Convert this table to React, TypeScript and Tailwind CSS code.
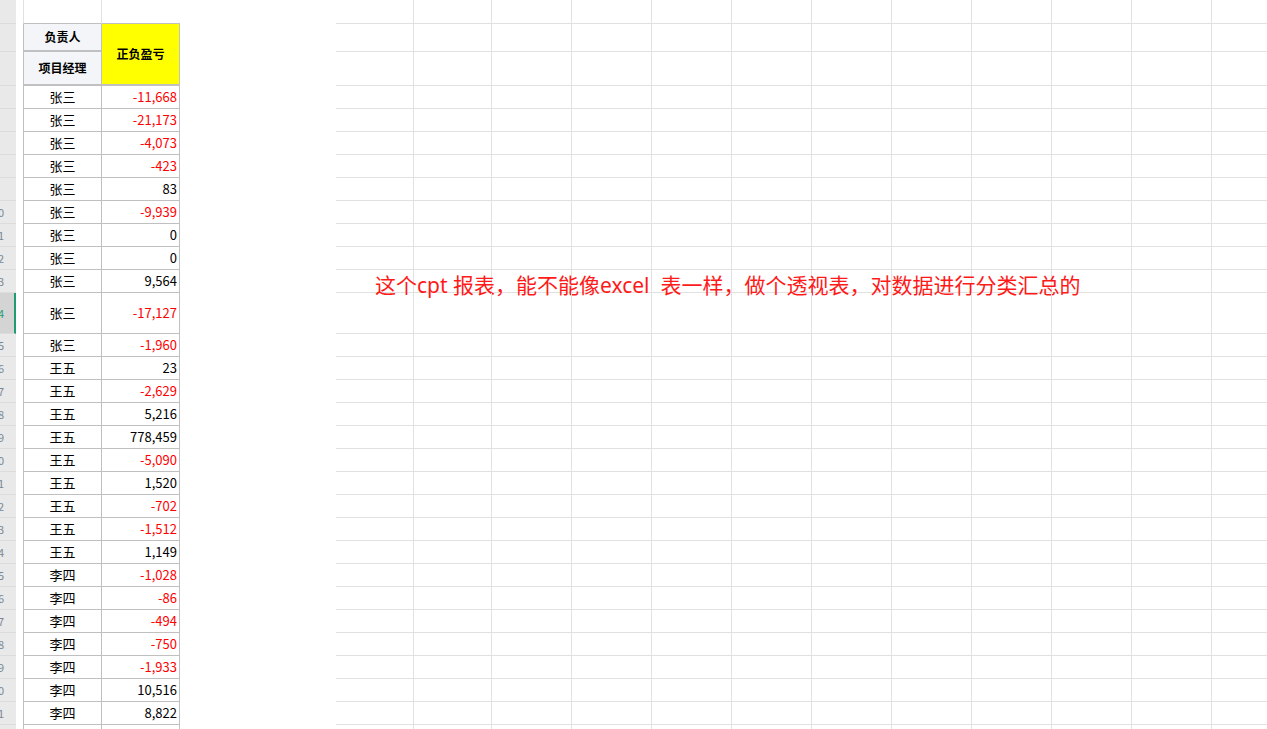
const rows: [string, string][] = [
  ['张三', '-11,668'],
  ['张三', '-21,173'],
  ['张三', '-4,073'],
  ['张三', '-423'],
  ['张三', '83'],
  ['张三', '-9,939'],
  ['张三', '0'],
  ['张三', '0'],
  ['张三', '9,564'],
  ['张三', '-17,127'],
  ['张三', '-1,960'],
  ['王五', '23'],
  ['王五', '-2,629'],
  ['王五', '5,216'],
  ['王五', '778,459'],
  ['王五', '-5,090'],
  ['王五', '1,520'],
  ['王五', '-702'],
  ['王五', '-1,512'],
  ['王五', '1,149'],
  ['李四', '-1,028'],
  ['李四', '-86'],
  ['李四', '-494'],
  ['李四', '-750'],
  ['李四', '-1,933'],
  ['李四', '10,516'],
  ['李四', '8,822'],
  ['', ''],
];

// columns of the empty sheet on the right
const cols = [
  'w-[78px]', 'w-[78px]', 'w-[80px]', 'w-[80px]', 'w-[80px]', 'w-[80px]',
  'w-[80px]', 'w-[80px]', 'w-[80px]', 'w-[80px]', 'w-[80px]',
];

const TALL = 9; // the 张三 -17,127 row
const NOTE = 8; // row holding the red note

function rowH(i: number) {
  return i === TALL ? 'h-[41px]' : 'h-[23px]';
}

function GridRow({ h, children }: { h: string; children?: React.ReactNode }) {
  return (
    <div className={`relative flex shrink-0 border-b border-[#e1e1e1] ${h}`}>
      {cols.map((w, i) => (
        <div key={i} className={`shrink-0 border-r border-[#e1e1e1] ${w}`} />
      ))}
      <div className="flex-1" />
      {children}
    </div>
  );
}

function Strip({ h, digit, active }: { h: string; digit?: string; active?: boolean }) {
  return (
    <div
      className={`flex w-[16px] shrink-0 items-center overflow-hidden border-b border-[#dcdcdc] text-[11px] ${h} ${
        active ? 'border-r-2 border-r-[#1f9d70] bg-[#d4d4d4] text-[#1f9d70]' : 'bg-[#e9e9e9] text-[#7b8894]'
      }`}
    >
      {digit && <span className="-ml-[2px]">{digit}</span>}
    </div>
  );
}

export default function App() {
  return (
    <div className="flex h-[729px] w-[1267px] overflow-hidden bg-white font-['Noto_Sans_CJK_SC',sans-serif]">
      {/* pasted picture of the report */}
      <div className="flex w-[336px] shrink-0 flex-col">
        <div className="flex h-[24px] shrink-0">
          <Strip h="h-[24px]" />
          <div className="w-[7px] shrink-0" />
          <div className="w-[79px] shrink-0 border-x border-b border-x-[#e1e1e1] border-b-[#c0c0c0]" />
          <div className="w-[78px] shrink-0 border-b border-[#c0c0c0]" />
          <div className="flex-1" />
        </div>

        <div className="flex h-[62px] shrink-0">
          <div className="flex flex-col">
            <Strip h="h-[28px]" />
            <Strip h="h-[34px]" />
          </div>
          <div className="w-[7px] shrink-0" />
          <div className="flex w-[79px] shrink-0 flex-col text-[12px] font-bold text-black">
            <div className="flex h-[28px] items-center justify-center border-x border-b-2 border-[#c0c0c0] bg-[#f3f5f8]">
              负责人
            </div>
            <div className="flex h-[34px] items-center justify-center border-x border-b-2 border-[#c0c0c0] bg-[#f3f5f8]">
              项目经理
            </div>
          </div>
          <div className="flex w-[78px] shrink-0 items-center justify-center border-r border-b-2 border-[#c0c0c0] bg-[#ffff00] text-[12px] font-bold text-black">
            正负盈亏
          </div>
          <div className="flex-1" />
        </div>

        {rows.map(([name, value], i) => {
          const n = i + 5;
          return (
            <div key={i} className={`flex shrink-0 ${rowH(i)}`}>
              <Strip h={rowH(i)} digit={n >= 10 ? String(n % 10) : undefined} active={i === TALL} />
              <div className="w-[7px] shrink-0" />
              <div className="flex w-[79px] shrink-0 items-center justify-center border-x border-b border-[#c0c0c0] text-[13px] text-black">
                {name}
              </div>
              <div
                className={`flex w-[78px] shrink-0 items-center justify-end border-r border-b border-[#c0c0c0] pr-[2px] text-[13px] ${
                  value.startsWith('-') ? 'text-[#ff0000]' : 'text-black'
                }`}
              >
                {value}
              </div>
              <div className="flex-1" />
            </div>
          );
        })}
      </div>

      {/* the sheet */}
      <div className="flex flex-1 flex-col">
        <GridRow h="h-[24px]" />
        <GridRow h="h-[28px]" />
        <GridRow h="h-[34px]" />
        {rows.map((_, i) => (
          <GridRow key={i} h={rowH(i)}>
            {i === NOTE && (
              <div className="absolute left-[39px] top-[5px] whitespace-nowrap font-['Noto_Sans','Noto_Sans_CJK_SC',sans-serif] text-[21px] leading-[21px] text-[#ff1a1a]">
                这个cpt 报表，能不能像excel&nbsp;&nbsp;表一样，做个透视表，对数据进行分类汇总的
              </div>
            )}
          </GridRow>
        ))}
      </div>
    </div>
  );
}
